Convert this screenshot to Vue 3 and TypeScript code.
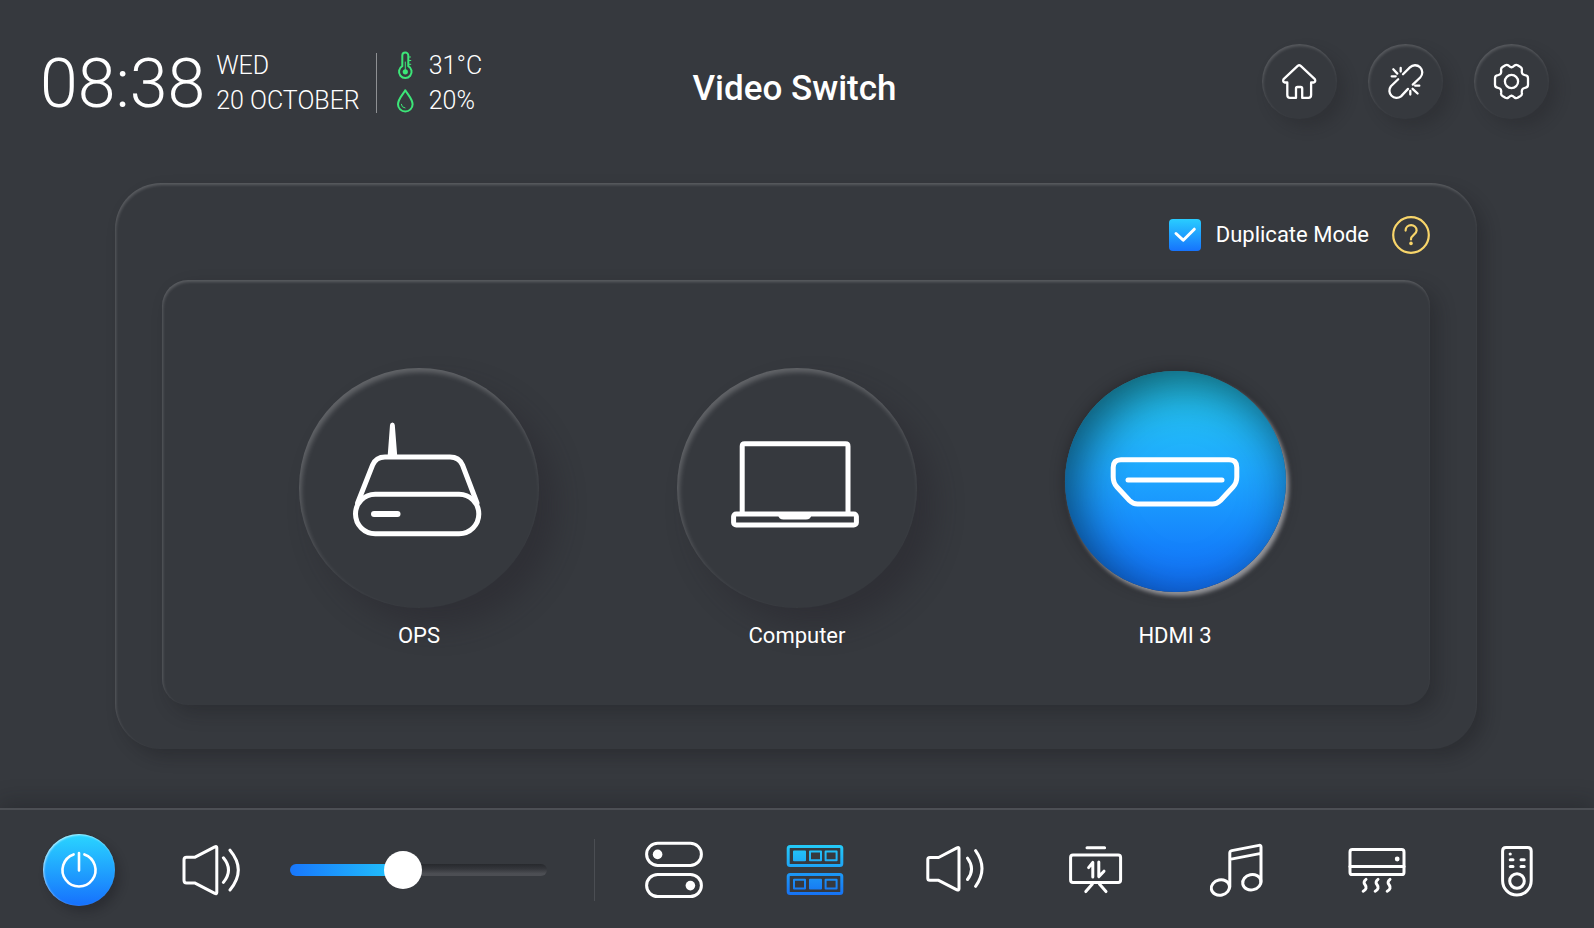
<script setup lang="ts">
import { computed, ref } from 'vue'

interface Source {
  id: string
  label: string
}

const sources: Source[] = [
  { id: 'ops', label: 'OPS' },
  { id: 'computer', label: 'Computer' },
  { id: 'hdmi', label: 'HDMI 3' },
]

const activeSource = ref('hdmi')
const duplicate = ref(true)
const volume = ref(43)

const sliderStyle = computed(() => ({ '--level': `${volume.value}%` }))

const tabs: Source[] = [
  { id: 'toggles', label: 'Switches' },
  { id: 'video', label: 'Video switch' },
  { id: 'audio', label: 'Audio' },
  { id: 'board', label: 'Projector screen' },
  { id: 'music', label: 'Music' },
  { id: 'climate', label: 'Air conditioner' },
  { id: 'remote', label: 'Remote control' },
]
const activeTab = ref('video')
</script>

<template>
  <div class="page">
    <header class="header">
      <div class="status">
        <time class="clock">08:38</time>
        <div class="pair date">
          <span>WED</span>
          <span>20 OCTOBER</span>
        </div>
        <div class="pair climate">
          <span class="reading">
            <svg class="glyph" viewBox="0 0 20 30" aria-hidden="true">
              <path d="M6.3 15.2V4.5a3 3 0 0 1 6 0V15.2A6.3 6.3 0 1 1 6.3 15.2Z" />
              <path class="fine" d="M9.3 11V20M13 9.5H14.8M13 13.3H14.8M13 6H14.5" />
              <circle class="solid" cx="9.3" cy="20.8" r="2.6" />
            </svg>
            31°C
          </span>
          <span class="reading">
            <svg class="glyph" viewBox="0 0 20 30" aria-hidden="true">
              <path d="M9.3 4.2C7 8.2 2 13.2 2 18.2a7.3 7.3 0 0 0 14.6 0C16.6 13.2 11.6 8.2 9.3 4.2Z" />
              <path class="fine" d="M5.3 18.3A4 4 0 0 0 9 22" />
            </svg>
            20%
          </span>
        </div>
      </div>

      <h1 class="title">Video Switch</h1>

      <div class="actions">
        <button class="round" type="button" aria-label="Home">
          <svg viewBox="0 0 75 75" aria-hidden="true">
            <path d="M35.7 21.9 21.6 35.2Q20.3 37.3 22.6 38.5H25.3V51Q25.3 53.9 28 53.9H34V44.5Q34 43 35.5 43H38.7Q40.2 43 40.2 44.5V53.9H46.4Q49.1 53.9 49.1 51V38.5H51.8Q54.1 37.3 52.8 35.2L38.7 21.9Q37.2 20.7 35.7 21.9Z" />
          </svg>
        </button>
        <button class="round" type="button" aria-label="Disconnect">
          <svg viewBox="0 0 75 75" aria-hidden="true">
            <path d="M35 30.3 41.9 23.4A7.2 7.2 0 0 1 52.2 33.5L44.8 40.6" />
            <path d="M30.2 35.2 22.9 42.3A7.2 7.2 0 0 0 33 52.4L40 44.9" />
            <path d="M25.3 25.3 29.3 29.6M32.7 24V27.6M23.7 32.3H27.7M44.6 44.8 49.6 49.5M47.2 41.7H51.3M42.3 47V50.6" />
          </svg>
        </button>
        <button class="round" type="button" aria-label="Settings">
          <svg viewBox="0 0 75 75" aria-hidden="true">
            <path d="M37.5 23.4Q39 23 40.5 21.5Q42 20.4 43.6 21.2L46.5 23Q48.3 24.2 47.9 26.3Q47.2 30.6 51 31.2Q54 31.5 54 34.2V40.8Q54 43.5 51 43.8Q47.2 44.4 47.9 48.7Q48.3 50.8 46.5 52L43.6 53.8Q42 54.6 40.5 53.5Q39 52 37.5 51.6Q36 52 34.5 53.5Q33 54.6 31.4 53.8L28.5 52Q26.7 50.8 27.1 48.7Q27.8 44.4 24 43.8Q21 43.5 21 40.8V34.2Q21 31.5 24 31.2Q27.8 30.6 27.1 26.3Q26.7 24.2 28.5 23L31.4 21.2Q33 20.4 34.5 21.5Q36 23 37.5 23.4Z" />
            <circle cx="37.5" cy="37.5" r="6.6" />
          </svg>
        </button>
      </div>
    </header>

    <main class="panel">
      <div class="options">
        <label class="mode">
          <span class="tick">
            <input v-model="duplicate" type="checkbox" />
            <svg v-if="duplicate" viewBox="0 0 32 32" aria-hidden="true">
              <path d="M7 14.5 14.2 21.2 25.3 10.2" />
            </svg>
          </span>
          Duplicate Mode
        </label>
        <button class="help" type="button" aria-label="Help">
          <svg viewBox="0 0 38 38" aria-hidden="true">
            <circle cx="19" cy="19" r="17.8" />
            <path d="M13.6 14.6C13.6 7.4 24.6 7.4 24.6 14.4C24.6 18.6 19 18.6 19 23.4" />
            <circle class="dot" cx="19" cy="27.4" r="1.8" />
          </svg>
        </button>
      </div>

      <section class="sources">
        <button
          v-for="source in sources"
          :key="source.id"
          class="source"
          :class="{ active: source.id === activeSource }"
          type="button"
          @click="activeSource = source.id"
        >
          <span class="well">
            <span class="disc">
              <svg v-if="source.id === 'ops'" viewBox="0 0 240 240" aria-hidden="true">
                <rect x="56.5" y="126.3" width="123.3" height="39.4" rx="19.7" />
                <path d="M58.6 135 73.6 97Q77 89 86 89H151Q160 89 163.5 97L178 135" />
                <path class="solid" d="M88.5 90 91 57Q91.2 54.4 93.4 54.4Q95.6 54.4 95.8 57L98.4 90Z" />
                <path class="dash" d="M75 146H98.5" />
              </svg>
              <svg v-else-if="source.id === 'computer'" viewBox="0 0 240 240" aria-hidden="true">
                <path d="M65.2 145V78.2Q65.2 75.8 67.6 75.8H168.6Q171 75.8 171 78.2V145" />
                <rect x="56.6" y="146" width="122.8" height="11" rx="2.6" />
                <path class="solid" d="M101 147H134.5Q133.5 151.5 129 151.5H106.5Q102 151.5 101 147Z" />
              </svg>
              <svg v-else viewBox="0 0 221 221" aria-hidden="true">
                <path d="M56 88.7H164Q171.8 88.7 171.8 96.5V106Q171.8 112 168 116L155.5 129.5Q152 133 147.5 133H72.5Q68 133 64.5 129.5L52 116Q48.2 112 48.2 106V96.5Q48.2 88.7 56 88.7Z" />
                <path d="M63 109H157" />
              </svg>
            </span>
          </span>
          <span class="caption">{{ source.label }}</span>
        </button>
      </section>
    </main>

    <footer class="dock">
      <button class="power" type="button" aria-label="Power">
        <svg viewBox="0 0 72 72" aria-hidden="true">
          <path d="M30.6 20.4A16.5 16.5 0 1 0 41.4 20.4M36 19V36.5" />
        </svg>
      </button>
      <button class="mute" type="button" aria-label="Mute">
        <svg viewBox="0 0 62 62" aria-hidden="true">
          <path d="M14.6 18.3H6.6Q4 18.3 4 21V41.2Q4 43.9 6.6 43.9H14.6L34.8 54.4Q36.8 55.2 36.8 53.4V8.8Q36.8 7 34.8 7.8Z" />
          <path d="M43.4 18.8Q53.6 31 43.4 43.4M50 11.2Q66.6 31 50 51" />
        </svg>
      </button>
      <input
        v-model.number="volume"
        class="slider"
        type="range"
        min="0"
        max="100"
        aria-label="Volume"
        :style="sliderStyle"
      />
      <nav class="tabs">
        <button
          v-for="tab in tabs"
          :key="tab.id"
          class="tab"
          type="button"
          :aria-label="tab.label"
          :aria-pressed="tab.id === activeTab"
          @click="activeTab = tab.id"
        >
          <svg v-if="tab.id === 'toggles'" viewBox="0 0 62 62" aria-hidden="true">
            <rect x="3.6" y="4.2" width="54.8" height="22.2" rx="11.1" />
            <rect x="3.6" y="35.4" width="54.8" height="22.2" rx="11.1" />
            <circle class="solid" cx="14.6" cy="15.4" r="4.8" />
            <circle class="solid" cx="47.4" cy="46.6" r="4.8" />
          </svg>
          <svg v-else-if="tab.id === 'video'" class="lit" viewBox="0 0 62 62" aria-hidden="true">
            <defs>
              <linearGradient id="lit-line" gradientUnits="userSpaceOnUse" x1="0" y1="6" x2="0" y2="56">
                <stop offset="0" stop-color="#24cbf8" />
                <stop offset="1" stop-color="#1672f4" />
              </linearGradient>
            </defs>
            <rect x="4.2" y="7.6" width="53.6" height="19" rx="2" />
            <rect x="4.2" y="35.6" width="53.6" height="19" rx="2" />
            <g class="slots">
              <rect class="on" x="10" y="12.6" width="11" height="8.6" />
              <rect x="26" y="12.6" width="11" height="8.6" />
              <rect x="41.6" y="12.6" width="11" height="8.6" />
              <rect x="10" y="40.8" width="11" height="8.6" />
              <rect class="on" x="26" y="40.8" width="11" height="8.6" />
              <rect x="41.6" y="40.8" width="11" height="8.6" />
            </g>
          </svg>
          <svg v-else-if="tab.id === 'audio'" viewBox="0 0 62 62" aria-hidden="true">
            <path d="M14.6 18.5H5.8Q3.8 18.5 3.8 20.5V39.3Q3.8 41.3 5.8 41.3H14.6L33 50.8Q35 51.6 35 49.8V9.8Q35 8 33 8.8Z" />
            <path d="M43.5 19.2Q51.6 30 43.5 40.5M51.6 11.6Q64.4 29.5 51.6 47.3" />
          </svg>
          <svg v-else-if="tab.id === 'board'" viewBox="0 0 62 62" aria-hidden="true">
            <rect x="5.6" y="16" width="50" height="27.4" rx="2.4" />
            <path d="M22 8.8H39.6M27.4 45 20.8 52.6M34.4 45 41 52.6" />
            <path d="M23.6 28.6 27.8 23.4V38M39 32.2 33.8 37.6V23" />
          </svg>
          <svg v-else-if="tab.id === 'music'" viewBox="0 0 62 62" aria-hidden="true">
            <ellipse cx="15.4" cy="48.5" rx="9.2" ry="7.6" transform="rotate(-12 15.4 48.5)" />
            <ellipse cx="46.8" cy="43.2" rx="9.2" ry="7.6" transform="rotate(-12 46.8 43.2)" />
            <path d="M24.8 48V14Q24.8 12 26.8 11.6L54 6.4Q56 6 56 8V43M24.8 20.4 56 14.4" />
          </svg>
          <svg v-else-if="tab.id === 'climate'" viewBox="0 0 62 62" aria-hidden="true">
            <rect x="4" y="10.6" width="54" height="25" rx="2.4" />
            <path d="M4 27.6H58" />
            <circle class="solid" cx="51.2" cy="20" r="2.4" />
            <path d="M20 40.4Q16.6 43 19.2 46Q21.8 49.6 17.2 52.2M32 40.4Q28.6 43 31.2 46Q33.8 49.6 29.2 52.2M44 40.4Q40.6 43 43.2 46Q45.8 49.6 41.2 52.2" />
          </svg>
          <svg v-else viewBox="0 0 62 62" aria-hidden="true">
            <path d="M20 8.4H41.6Q45.2 8.4 45.2 12V41.8A14.3 14.3 0 0 1 16.6 41.8V12Q16.6 8.4 20 8.4Z" />
            <circle cx="31" cy="42" r="7.3" />
            <path d="M24.2 20.8H27M35 20.8H38.2M24.2 27.4H27M35 27.4H38.2" />
            <circle class="solid" cx="24.2" cy="15" r="1.6" />
          </svg>
        </button>
      </nav>
    </footer>
  </div>
</template>

<style>
body {
  margin: 0;
  background: #36393e;
}
</style>

<style scoped>
.page {
  display: flex;
  flex-direction: column;
  min-height: 100vh;
  box-sizing: border-box;
  overflow: hidden;
  background: #36393e;
  color: #fff;
  font-family: Roboto, "Noto Sans", sans-serif;
}

button {
  padding: 0;
  border: 0;
  background: none;
  color: inherit;
  font: inherit;
  cursor: pointer;
}

svg {
  display: block;
  fill: none;
  stroke: #fff;
  stroke-width: 3;
  stroke-linecap: round;
  stroke-linejoin: round;
}

.solid {
  fill: #fff;
  stroke: none;
}

/* Header */
.header {
  display: grid;
  grid-template-columns: 1fr auto 1fr;
  align-items: start;
  padding: 44px 45px 0 40px;
  height: 139px;
}

.status {
  display: flex;
  align-items: center;
  padding-top: 4px;
}

.clock {
  padding-top: 2px;
  font-size: 68px;
  font-weight: 300;
  line-height: 68px;
}

.pair {
  display: flex;
  flex-direction: column;
  height: 70px;
  justify-content: center;
  font-size: 25px;
  font-weight: 300;
  line-height: 35px;
  white-space: nowrap;
}

.date {
  margin-left: 11px;
}

.climate {
  height: 60px;
  margin-left: 16px;
  padding-left: 19px;
  border-left: 1px solid #8e9093;
}

.reading {
  display: flex;
  align-items: center;
  gap: 13px;
}

.glyph {
  width: 20px;
  height: 30px;
  stroke: #3ce678;
  stroke-width: 2;
}

.glyph .solid {
  fill: #3ce678;
}

.glyph .fine {
  stroke-width: 1;
}

.title {
  margin: 0;
  padding-top: 24px;
  font-size: 35px;
  font-weight: 500;
  line-height: 42px;
}

.actions {
  display: flex;
  justify-content: flex-end;
  gap: 31px;
}

.round {
  width: 75px;
  height: 75px;
  border-radius: 50%;
  box-shadow:
    8px 8px 14px rgba(30, 30, 35, 0.26),
    inset 1px 2px 3px rgba(255, 255, 255, 0.17);
}

.round svg {
  width: 75px;
  height: 75px;
  stroke-width: 2.3;
}

/* Panel */
.panel {
  display: flex;
  flex: 1;
  flex-direction: column;
  margin: 0 117px 59px 115px;
  padding: 0 47px 44px;
  border-radius: 46px;
  box-shadow:
    8px 8px 16px rgba(20, 22, 26, 0.28),
    inset 1px 2px 3px rgba(255, 255, 255, 0.18);
}

.options {
  display: flex;
  align-items: center;
  justify-content: flex-end;
  gap: 23px;
  height: 90px;
  padding-top: 7px;
}

.mode {
  display: flex;
  align-items: center;
  gap: 15px;
  font-size: 22px;
  line-height: 32px;
}

.tick {
  display: grid;
}

.tick > * {
  grid-area: 1 / 1;
  width: 32px;
  height: 32px;
  margin: 0;
}

.tick input {
  appearance: none;
  border-radius: 4px;
  background: #2b2e32;
}

.tick input:checked {
  background: linear-gradient(#29cdff, #1673fd);
}

.tick svg {
  pointer-events: none;
}

.help svg {
  width: 38px;
  height: 38px;
  stroke: #f8d56a;
  stroke-width: 2.2;
}

.help .dot {
  fill: #f8d56a;
  stroke: none;
}

.sources {
  display: grid;
  flex: 1;
  grid-template-columns: repeat(3, 1fr);
  align-items: start;
  padding: 88px 66px 48px 68px;
  border-radius: 26px;
  box-shadow:
    8px 8px 18px rgba(20, 22, 26, 0.28),
    inset 1px 2px 3px rgba(255, 255, 255, 0.18);
}

.source {
  display: flex;
  flex-direction: column;
  align-items: center;
  gap: 13px;
}

.well {
  display: flex;
  justify-content: center;
  height: 240px;
}

.disc {
  width: 240px;
  height: 240px;
  border-radius: 50%;
  box-shadow:
    18px 18px 28px rgba(38, 36, 42, 0.4),
    inset 2px 4px 5px rgba(255, 255, 255, 0.22);
}

.disc svg {
  width: 100%;
  height: 100%;
  stroke-width: 5;
}

.disc .dash {
  stroke-width: 6;
}

.active .disc {
  width: 221px;
  height: 221px;
  margin-top: 3px;
  background: linear-gradient(#26ccf2 4%, #1ea8ff 45%, #1584fc 78%, #1270fa);
  box-shadow:
    3px 4px 4px rgba(190, 190, 194, 0.7),
    0 0 14px rgba(28, 26, 32, 0.6),
    inset 10px 12px 48px rgba(0, 24, 34, 0.66);
}

.caption {
  font-size: 22px;
  line-height: 30px;
}

/* Dock */
.dock {
  display: flex;
  align-items: center;
  height: 117px;
  padding: 1px 46px 0 43px;
  border-top: 2px solid #4c4f54;
  box-shadow: 0 -6px 20px rgba(20, 22, 26, 0.3);
}

.power {
  width: 72px;
  height: 72px;
  border-radius: 50%;
  background: linear-gradient(#2ad6ff, #1670fd);
  box-shadow:
    5px 6px 10px rgba(20, 20, 26, 0.3),
    inset 1px 1px 2px rgba(255, 255, 255, 0.65);
}

.power svg {
  stroke-width: 2.6;
}

.mute {
  width: 62px;
  height: 62px;
  margin-left: 65px;
}

.mute svg {
  stroke-width: 3;
}

.slider {
  width: 257px;
  height: 38px;
  margin: 0 0 0 48px;
  appearance: none;
  background: none;
}

.slider::-webkit-slider-runnable-track {
  height: 12px;
  border-radius: 6px;
  background:
    linear-gradient(90deg, #1877fc, #22c6fb) 0 0 / var(--level) 100% no-repeat,
    linear-gradient(#27292d, #34363b 40%, #4c4e53 80%);
}

.slider::-webkit-slider-thumb {
  width: 38px;
  height: 38px;
  margin-top: -13px;
  appearance: none;
  border-radius: 50%;
  background: #fff;
}

.tabs {
  display: flex;
  flex: 1;
  align-items: center;
  justify-content: space-between;
  height: 62px;
  margin-left: 47px;
  padding-left: 48px;
  border-left: 1px solid #4b4e53;
}

.tab {
  width: 62px;
  height: 62px;
}

.lit rect {
  stroke: url(#lit-line);
}

.slots rect {
  stroke-width: 2;
}

.slots .on {
  fill: url(#lit-line);
}
</style>
